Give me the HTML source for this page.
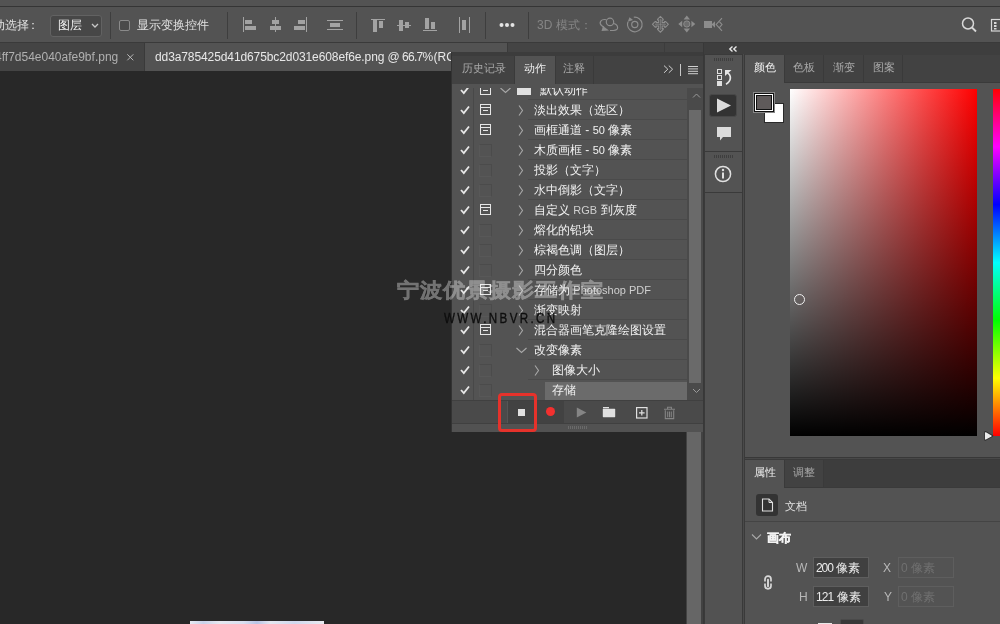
<!DOCTYPE html>
<html><head><meta charset="utf-8">
<style>
*{margin:0;padding:0;box-sizing:border-box}
html,body{width:1000px;height:624px;overflow:hidden;background:#282828;font-family:"Liberation Sans",sans-serif;}
.a{position:absolute}
.t{position:absolute;white-space:nowrap;font-size:12px;line-height:16px;color:#e0e0e0}
</style></head><body>
<!-- top strip -->
<div class="a" style="left:0;top:0;width:1000px;height:6px;background:#535353"></div>
<div class="a" style="left:0;top:6px;width:1000px;height:1px;background:#353535"></div>
<!-- options bar -->
<div class="a" style="left:0;top:7px;width:1000px;height:35px;background:#535353"></div>
<div class="a" style="left:0;top:42px;width:1000px;height:1px;background:#3a3a3a"></div>

<div class="t" style="left:-19px;top:17px">自动选择</div><div class="t" style="left:26.5px;top:17px">：</div>
<div class="a" style="left:50px;top:15px;width:52px;height:22px;background:#474747;border:1px solid #626262;border-radius:3px"></div>
<div class="t" style="left:58px;top:17px;color:#f0f0f0">图层</div>
<svg class="a" style="left:90px;top:22px" width="10" height="8"><path d="M2 2 L5 5 L8 2" stroke="#c8c8c8" stroke-width="1.3" fill="none"/></svg>
<div class="a" style="left:110px;top:12px;width:1px;height:27px;background:#3e3e3e"></div>
<div class="a" style="left:119px;top:20px;width:11px;height:11px;border:1px solid #8a8a8a;border-radius:2px;background:#4a4a4a"></div>
<div class="t" style="left:137px;top:17px">显示变换控件</div>
<div class="a" style="left:227px;top:12px;width:1px;height:27px;background:#3e3e3e"></div>

<!-- align icons -->
<svg class="a" style="left:0;top:0" width="1000" height="42">
<g fill="#a3a3a3">
<rect x="243" y="17" width="1" height="15"/><rect x="245" y="20" width="7" height="4"/><rect x="245" y="26" width="11" height="4"/>
<rect x="275" y="17" width="1" height="15"/><rect x="272" y="20" width="7" height="4"/><rect x="270" y="26" width="11" height="4"/>
<rect x="306" y="17" width="1" height="15"/><rect x="298" y="20" width="7" height="4"/><rect x="294" y="26" width="11" height="4"/>
<rect x="327" y="20" width="16" height="1"/><rect x="330" y="23" width="10" height="4"/><rect x="327" y="29" width="16" height="1"/>
<rect x="371" y="19" width="14" height="1"/><rect x="373" y="20" width="4" height="12"/><rect x="379" y="21" width="4" height="7"/>
<rect x="397" y="25" width="14" height="1"/><rect x="399" y="20" width="4" height="11"/><rect x="405" y="22" width="4" height="6"/>
<rect x="423" y="30" width="14" height="1"/><rect x="425" y="18" width="4" height="11"/><rect x="431" y="22" width="4" height="7"/>
<rect x="459" y="17" width="1" height="16"/><rect x="469" y="17" width="1" height="16"/><rect x="462" y="20" width="4" height="10"/>
</g>
<rect x="356" y="12" width="1" height="27" fill="#3e3e3e"/>
<rect x="485" y="12" width="1" height="27" fill="#3e3e3e"/>
<rect x="528" y="12" width="1" height="27" fill="#3e3e3e"/>
<g fill="#e4e4e4"><circle cx="501.5" cy="25" r="2"/><circle cx="507" cy="25" r="2"/><circle cx="512.5" cy="25" r="2"/></g>
<!-- search -->
<circle cx="968" cy="23.5" r="5.5" stroke="#d8d8d8" stroke-width="1.5" fill="none"/>
<path d="M972 27.5 L976 31.5" stroke="#d8d8d8" stroke-width="1.8"/>
<rect x="991.5" y="19.5" width="12" height="11.5" stroke="#d8d8d8" stroke-width="1.2" fill="none"/>
<rect x="994" y="22" width="2.5" height="2" fill="#d8d8d8"/><rect x="994" y="25" width="2.5" height="2" fill="#d8d8d8"/><rect x="994" y="28" width="2.5" height="1.5" fill="#d8d8d8"/>
</svg>
<div class="t" style="left:537px;top:17px;color:#858585">3D 模式：</div>

<!-- doc tab bar -->
<div class="a" style="left:0;top:43px;width:705px;height:28px;background:#444"></div><div class="a" style="left:507px;top:43px;width:1px;height:28px;background:#3a3a3a"></div><div class="a" style="left:664px;top:43px;width:1px;height:28px;background:#3c3c3c"></div>
<div class="a" style="left:145px;top:43px;width:362px;height:28px;background:#535353"></div>
<div class="a" style="left:144px;top:43px;width:1px;height:28px;background:#3a3a3a"></div>
<div class="t" style="left:-5px;top:49px;color:#b0b0b0">4ff7d54e040afe9bf.png</div>
<svg class="a" style="left:126px;top:53px" width="9" height="9"><path d="M1.3 1.3 L7.3 7.3 M7.3 1.3 L1.3 7.3" stroke="#b8b8b8" stroke-width="1"/></svg>
<div class="t" style="left:155px;top:49px;color:#e8e8e8;letter-spacing:-0.1px">dd3a785425d41d675bc2d031e608ef6e.png</div><div class="t" style="left:387.5px;top:49px;color:#e8e8e8">@</div><div class="t" style="left:402px;top:49px;color:#e8e8e8;letter-spacing:-0.7px">66.7%</div><div class="t" style="left:433.5px;top:49px;color:#e8e8e8">(RGB/8)</div>

<!-- canvas -->
<div class="a" style="left:0;top:71px;width:686px;height:553px;background:#282828"></div>
<div class="a" style="left:190px;top:621px;width:134px;height:3px;background:linear-gradient(to right,#e8eaf2 0%,#c9d2ea 10%,#e6e8f0 22%,#d9dff0 40%,#b8c4e6 50%,#e4e7f0 60%,#d0d8ee 78%,#e8eaf0 100%)"></div>
<!-- doc scrollbar -->
<div class="a" style="left:686px;top:71px;width:18px;height:553px;background:#424242"></div>
<div class="a" style="left:687px;top:71px;width:14px;height:553px;background:#666"></div>
<div class="a" style="left:703px;top:43px;width:2px;height:581px;background:#333"></div>
<!-- ACTIONS -->
<div class="a" style="left:452px;top:52px;width:252px;height:380px;background:#535353;overflow:hidden">
<div class="a" style="left:0;top:0;width:252px;height:4px;background:#3c3c3c"></div>
<div class="a" style="left:0;top:4px;width:252px;height:28px;background:#424242"></div>
<div class="a" style="left:63px;top:4px;width:40px;height:28px;background:#535353"></div>
<div class="a" style="left:62px;top:4px;width:1px;height:28px;background:#3a3a3a"></div>
<div class="a" style="left:103px;top:4px;width:1px;height:28px;background:#3a3a3a"></div>
<div class="a" style="left:141px;top:4px;width:1px;height:28px;background:#3a3a3a"></div>
<div class="t" style="left:10px;top:7.5px;font-size:11px;color:#a8a8a8">历史记录</div>
<div class="t" style="left:72px;top:7.5px;font-size:11px;font-weight:500;color:#f0f0f0">动作</div>
<div class="t" style="left:111px;top:7.5px;font-size:11px;color:#a8a8a8">注释</div>
<svg class="a" style="left:208px;top:11px" width="44" height="16"><path d="M4 2.6 L7.8 6.2 L4 9.8 M8.8 2.6 L12.6 6.2 L8.8 9.8" stroke="#d0d0d0" stroke-width="1" fill="none"/><rect x="20" y="1" width="1" height="12" fill="#c8c8c8"/><g fill="#d0d0d0"><rect x="28" y="3" width="10" height="1"/><rect x="28" y="5.4" width="10" height="1"/><rect x="28" y="7.8" width="10" height="1"/><rect x="28" y="10.2" width="10" height="1"/></g></svg>
<div class="a" style="left:0;top:36px;width:252px;height:312px;overflow:hidden;background:#535353">
<div class="a" style="left:21px;top:0;width:1px;height:312px;background:#484848"></div>
<div class="a" style="left:76px;top:11px;width:159px;height:1px;background:#4a4a4a"></div>
<svg class="a" style="left:8px;top:-3px" width="10" height="10"><path d="M1 5 L3.8 8 L9 1.5" stroke="#e8e8e8" stroke-width="1.8" fill="none"/></svg>
<svg class="a" style="left:28px;top:-4px" width="11" height="11" shape-rendering="crispEdges"><g fill="#e6e6e6"><rect x="0" y="0" width="11" height="1"/><rect x="0" y="10" width="11" height="1"/><rect x="0" y="0" width="1" height="11"/><rect x="10" y="0" width="1" height="11"/><rect x="0" y="3" width="11" height="1"/><rect x="3" y="6" width="5" height="1"/></g></svg>
<svg class="a" style="left:48px;top:-1px" width="11" height="7"><path d="M0.5 1 L5.5 5.5 L10.5 1" stroke="#a8a8a8" stroke-width="1.1" fill="none"/></svg>
<div class="a" style="left:65px;top:-4px;width:14px;height:11px;background:#e0e0e0"></div>
<div class="t" style="left:88px;top:-6px;font-size:12px;font-weight:500;color:#f2f2f2">默认动作</div>
<div class="a" style="left:76px;top:31px;width:159px;height:1px;background:#4a4a4a"></div>
<svg class="a" style="left:8px;top:17px" width="10" height="10"><path d="M1 5 L3.8 8 L9 1.5" stroke="#e8e8e8" stroke-width="1.8" fill="none"/></svg>
<svg class="a" style="left:28px;top:16px" width="11" height="11" shape-rendering="crispEdges"><g fill="#e6e6e6"><rect x="0" y="0" width="11" height="1"/><rect x="0" y="10" width="11" height="1"/><rect x="0" y="0" width="1" height="11"/><rect x="10" y="0" width="1" height="11"/><rect x="0" y="3" width="11" height="1"/><rect x="3" y="6" width="5" height="1"/></g></svg>
<svg class="a" style="left:66px;top:17px" width="6" height="11"><path d="M1 0.5 L4.5 5.5 L1 10.5" stroke="#a8a8a8" stroke-width="1.1" fill="none"/></svg>
<div class="t" style="left:82px;top:14px;font-size:12px;font-weight:500;color:#f2f2f2">淡出效果（选区）</div>
<div class="a" style="left:76px;top:51px;width:159px;height:1px;background:#4a4a4a"></div>
<svg class="a" style="left:8px;top:37px" width="10" height="10"><path d="M1 5 L3.8 8 L9 1.5" stroke="#e8e8e8" stroke-width="1.8" fill="none"/></svg>
<svg class="a" style="left:28px;top:36px" width="11" height="11" shape-rendering="crispEdges"><g fill="#e6e6e6"><rect x="0" y="0" width="11" height="1"/><rect x="0" y="10" width="11" height="1"/><rect x="0" y="0" width="1" height="11"/><rect x="10" y="0" width="1" height="11"/><rect x="0" y="3" width="11" height="1"/><rect x="3" y="6" width="5" height="1"/></g></svg>
<svg class="a" style="left:66px;top:37px" width="6" height="11"><path d="M1 0.5 L4.5 5.5 L1 10.5" stroke="#a8a8a8" stroke-width="1.1" fill="none"/></svg>
<div class="t" style="left:82px;top:34px;font-size:12px;font-weight:500;color:#f2f2f2">画框通道 - <span style="font-size:11px">50</span> 像素</div>
<div class="a" style="left:76px;top:71px;width:159px;height:1px;background:#4a4a4a"></div>
<svg class="a" style="left:8px;top:57px" width="10" height="10"><path d="M1 5 L3.8 8 L9 1.5" stroke="#e8e8e8" stroke-width="1.8" fill="none"/></svg>
<div class="a" style="left:27px;top:56px;width:13px;height:13px;border:1px solid #4b4b4b;border-left-color:#585858;border-bottom-color:#585858"></div>
<svg class="a" style="left:66px;top:57px" width="6" height="11"><path d="M1 0.5 L4.5 5.5 L1 10.5" stroke="#a8a8a8" stroke-width="1.1" fill="none"/></svg>
<div class="t" style="left:82px;top:54px;font-size:12px;font-weight:500;color:#f2f2f2">木质画框 - <span style="font-size:11px">50</span> 像素</div>
<div class="a" style="left:76px;top:91px;width:159px;height:1px;background:#4a4a4a"></div>
<svg class="a" style="left:8px;top:77px" width="10" height="10"><path d="M1 5 L3.8 8 L9 1.5" stroke="#e8e8e8" stroke-width="1.8" fill="none"/></svg>
<div class="a" style="left:27px;top:76px;width:13px;height:13px;border:1px solid #4b4b4b;border-left-color:#585858;border-bottom-color:#585858"></div>
<svg class="a" style="left:66px;top:77px" width="6" height="11"><path d="M1 0.5 L4.5 5.5 L1 10.5" stroke="#a8a8a8" stroke-width="1.1" fill="none"/></svg>
<div class="t" style="left:82px;top:74px;font-size:12px;font-weight:500;color:#f2f2f2">投影（文字）</div>
<div class="a" style="left:76px;top:111px;width:159px;height:1px;background:#4a4a4a"></div>
<svg class="a" style="left:8px;top:97px" width="10" height="10"><path d="M1 5 L3.8 8 L9 1.5" stroke="#e8e8e8" stroke-width="1.8" fill="none"/></svg>
<div class="a" style="left:27px;top:96px;width:13px;height:13px;border:1px solid #4b4b4b;border-left-color:#585858;border-bottom-color:#585858"></div>
<svg class="a" style="left:66px;top:97px" width="6" height="11"><path d="M1 0.5 L4.5 5.5 L1 10.5" stroke="#a8a8a8" stroke-width="1.1" fill="none"/></svg>
<div class="t" style="left:82px;top:94px;font-size:12px;font-weight:500;color:#f2f2f2">水中倒影（文字）</div>
<div class="a" style="left:76px;top:131px;width:159px;height:1px;background:#4a4a4a"></div>
<svg class="a" style="left:8px;top:117px" width="10" height="10"><path d="M1 5 L3.8 8 L9 1.5" stroke="#e8e8e8" stroke-width="1.8" fill="none"/></svg>
<svg class="a" style="left:28px;top:116px" width="11" height="11" shape-rendering="crispEdges"><g fill="#e6e6e6"><rect x="0" y="0" width="11" height="1"/><rect x="0" y="10" width="11" height="1"/><rect x="0" y="0" width="1" height="11"/><rect x="10" y="0" width="1" height="11"/><rect x="0" y="3" width="11" height="1"/><rect x="3" y="6" width="5" height="1"/></g></svg>
<svg class="a" style="left:66px;top:117px" width="6" height="11"><path d="M1 0.5 L4.5 5.5 L1 10.5" stroke="#a8a8a8" stroke-width="1.1" fill="none"/></svg>
<div class="t" style="left:82px;top:114px;font-size:12px;font-weight:500;color:#f2f2f2">自定义 <span style="font-size:11px;color:#d0d0d0">RGB</span> 到灰度</div>
<div class="a" style="left:76px;top:151px;width:159px;height:1px;background:#4a4a4a"></div>
<svg class="a" style="left:8px;top:137px" width="10" height="10"><path d="M1 5 L3.8 8 L9 1.5" stroke="#e8e8e8" stroke-width="1.8" fill="none"/></svg>
<div class="a" style="left:27px;top:136px;width:13px;height:13px;border:1px solid #4b4b4b;border-left-color:#585858;border-bottom-color:#585858"></div>
<svg class="a" style="left:66px;top:137px" width="6" height="11"><path d="M1 0.5 L4.5 5.5 L1 10.5" stroke="#a8a8a8" stroke-width="1.1" fill="none"/></svg>
<div class="t" style="left:82px;top:134px;font-size:12px;font-weight:500;color:#f2f2f2">熔化的铅块</div>
<div class="a" style="left:76px;top:171px;width:159px;height:1px;background:#4a4a4a"></div>
<svg class="a" style="left:8px;top:157px" width="10" height="10"><path d="M1 5 L3.8 8 L9 1.5" stroke="#e8e8e8" stroke-width="1.8" fill="none"/></svg>
<div class="a" style="left:27px;top:156px;width:13px;height:13px;border:1px solid #4b4b4b;border-left-color:#585858;border-bottom-color:#585858"></div>
<svg class="a" style="left:66px;top:157px" width="6" height="11"><path d="M1 0.5 L4.5 5.5 L1 10.5" stroke="#a8a8a8" stroke-width="1.1" fill="none"/></svg>
<div class="t" style="left:82px;top:154px;font-size:12px;font-weight:500;color:#f2f2f2">棕褐色调（图层）</div>
<div class="a" style="left:76px;top:191px;width:159px;height:1px;background:#4a4a4a"></div>
<svg class="a" style="left:8px;top:177px" width="10" height="10"><path d="M1 5 L3.8 8 L9 1.5" stroke="#e8e8e8" stroke-width="1.8" fill="none"/></svg>
<div class="a" style="left:27px;top:176px;width:13px;height:13px;border:1px solid #4b4b4b;border-left-color:#585858;border-bottom-color:#585858"></div>
<svg class="a" style="left:66px;top:177px" width="6" height="11"><path d="M1 0.5 L4.5 5.5 L1 10.5" stroke="#a8a8a8" stroke-width="1.1" fill="none"/></svg>
<div class="t" style="left:82px;top:174px;font-size:12px;font-weight:500;color:#f2f2f2">四分颜色</div>
<div class="a" style="left:76px;top:211px;width:159px;height:1px;background:#4a4a4a"></div>
<svg class="a" style="left:8px;top:197px" width="10" height="10"><path d="M1 5 L3.8 8 L9 1.5" stroke="#e8e8e8" stroke-width="1.8" fill="none"/></svg>
<svg class="a" style="left:28px;top:196px" width="11" height="11" shape-rendering="crispEdges"><g fill="#e6e6e6"><rect x="0" y="0" width="11" height="1"/><rect x="0" y="10" width="11" height="1"/><rect x="0" y="0" width="1" height="11"/><rect x="10" y="0" width="1" height="11"/><rect x="0" y="3" width="11" height="1"/><rect x="3" y="6" width="5" height="1"/></g></svg>
<svg class="a" style="left:66px;top:197px" width="6" height="11"><path d="M1 0.5 L4.5 5.5 L1 10.5" stroke="#a8a8a8" stroke-width="1.1" fill="none"/></svg>
<div class="t" style="left:82px;top:194px;font-size:12px;font-weight:500;color:#f2f2f2">存储为 <span style="font-size:11px;color:#d0d0d0">Photoshop PDF</span></div>
<div class="a" style="left:76px;top:231px;width:159px;height:1px;background:#4a4a4a"></div>
<svg class="a" style="left:8px;top:217px" width="10" height="10"><path d="M1 5 L3.8 8 L9 1.5" stroke="#e8e8e8" stroke-width="1.8" fill="none"/></svg>
<div class="a" style="left:27px;top:216px;width:13px;height:13px;border:1px solid #4b4b4b;border-left-color:#585858;border-bottom-color:#585858"></div>
<svg class="a" style="left:66px;top:217px" width="6" height="11"><path d="M1 0.5 L4.5 5.5 L1 10.5" stroke="#a8a8a8" stroke-width="1.1" fill="none"/></svg>
<div class="t" style="left:82px;top:214px;font-size:12px;font-weight:500;color:#f2f2f2">渐变映射</div>
<div class="a" style="left:76px;top:251px;width:159px;height:1px;background:#4a4a4a"></div>
<svg class="a" style="left:8px;top:237px" width="10" height="10"><path d="M1 5 L3.8 8 L9 1.5" stroke="#e8e8e8" stroke-width="1.8" fill="none"/></svg>
<svg class="a" style="left:28px;top:236px" width="11" height="11" shape-rendering="crispEdges"><g fill="#e6e6e6"><rect x="0" y="0" width="11" height="1"/><rect x="0" y="10" width="11" height="1"/><rect x="0" y="0" width="1" height="11"/><rect x="10" y="0" width="1" height="11"/><rect x="0" y="3" width="11" height="1"/><rect x="3" y="6" width="5" height="1"/></g></svg>
<svg class="a" style="left:66px;top:237px" width="6" height="11"><path d="M1 0.5 L4.5 5.5 L1 10.5" stroke="#a8a8a8" stroke-width="1.1" fill="none"/></svg>
<div class="t" style="left:82px;top:234px;font-size:12px;font-weight:500;color:#f2f2f2">混合器画笔克隆绘图设置</div>
<div class="a" style="left:76px;top:271px;width:159px;height:1px;background:#4a4a4a"></div>
<svg class="a" style="left:8px;top:257px" width="10" height="10"><path d="M1 5 L3.8 8 L9 1.5" stroke="#e8e8e8" stroke-width="1.8" fill="none"/></svg>
<div class="a" style="left:27px;top:256px;width:13px;height:13px;border:1px solid #4b4b4b;border-left-color:#585858;border-bottom-color:#585858"></div>
<svg class="a" style="left:64px;top:259px" width="11" height="7"><path d="M0.5 1 L5.5 5.5 L10.5 1" stroke="#a8a8a8" stroke-width="1.1" fill="none"/></svg>
<div class="t" style="left:82px;top:254px;font-size:12px;font-weight:500;color:#f2f2f2">改变像素</div>
<div class="a" style="left:76px;top:291px;width:159px;height:1px;background:#4a4a4a"></div>
<svg class="a" style="left:8px;top:277px" width="10" height="10"><path d="M1 5 L3.8 8 L9 1.5" stroke="#e8e8e8" stroke-width="1.8" fill="none"/></svg>
<div class="a" style="left:27px;top:276px;width:13px;height:13px;border:1px solid #4b4b4b;border-left-color:#585858;border-bottom-color:#585858"></div>
<svg class="a" style="left:82px;top:277px" width="6" height="11"><path d="M1 0.5 L4.5 5.5 L1 10.5" stroke="#a8a8a8" stroke-width="1.1" fill="none"/></svg>
<div class="t" style="left:100px;top:274px;font-size:12px;font-weight:500;color:#f2f2f2">图像大小</div>
<div class="a" style="left:93px;top:293.5px;width:142px;height:18px;background:#6b6b6b"></div>
<svg class="a" style="left:8px;top:297px" width="10" height="10"><path d="M1 5 L3.8 8 L9 1.5" stroke="#e8e8e8" stroke-width="1.8" fill="none"/></svg>
<div class="a" style="left:27px;top:296px;width:13px;height:13px;border:1px solid #4b4b4b;border-left-color:#585858;border-bottom-color:#585858"></div>
<div class="t" style="left:100px;top:294px;font-size:12px;font-weight:500;color:#f2f2f2">存储</div>
<div class="a" style="left:235px;top:0;width:16px;height:312px;background:#4a4a4a"></div>
<div class="a" style="left:237px;top:22px;width:12px;height:273px;background:#6a6a6a"></div>
<svg class="a" style="left:240px;top:5px" width="9" height="6"><path d="M1 4.5 L4.5 1 L8 4.5" stroke="#9a9a9a" stroke-width="1" fill="none"/></svg>
<svg class="a" style="left:240px;top:300px" width="9" height="6"><path d="M1 1 L4.5 4.5 L8 1" stroke="#9a9a9a" stroke-width="1" fill="none"/></svg>
</div>
<div class="a" style="left:0;top:348px;width:252px;height:23px;background:#4a4a4a"></div>
<div class="a" style="left:0;top:348px;width:252px;height:1px;background:#404040"></div>
<div class="a" style="left:55px;top:349px;width:57px;height:22px;background:#424242"></div>
<div class="a" style="left:55px;top:349px;width:1px;height:22px;background:#555"></div>
<div class="a" style="left:66px;top:357px;width:7px;height:7px;background:#e0e0e0"></div>
<div class="a" style="left:94.20000000000005px;top:355.2px;width:9.2px;height:9.2px;border-radius:50%;background:#f3302f"></div>
<svg class="a" style="left:124px;top:355px" width="11" height="11"><path d="M0.8 0.6 L10.4 5.6 L0.8 10.6Z" fill="#858585"/></svg>
<svg class="a" style="left:150px;top:354px" width="15" height="13"><rect x="1" y="1" width="6" height="1.3" fill="#e0e0e0"/><rect x="0.8" y="2.8" width="12.4" height="8.4" rx="0.6" fill="#e0e0e0"/></svg>
<svg class="a" style="left:184px;top:355px" width="12" height="12"><rect x="0.6" y="0.6" width="10.4" height="10.4" stroke="#e0e0e0" stroke-width="1.2" fill="none"/><path d="M5.8 3 V8.6 M3 5.8 H8.6" stroke="#e0e0e0" stroke-width="1.2"/></svg>
<svg class="a" style="left:211px;top:354px" width="13" height="14"><path d="M1 3.2 H12 M4.6 3.2 V1.2 H8.4 V3.2" stroke="#858585" stroke-width="1.1" fill="none"/><path d="M2.3 4.2 V12.6 H10.7 V4.2" stroke="#858585" stroke-width="1.1" fill="none"/><path d="M4.7 5.5 V11.3 M6.5 5.5 V11.3 M8.3 5.5 V11.3" stroke="#858585" stroke-width="1"/></svg>
<div class="a" style="left:0;top:371px;width:252px;height:9px;background:#525252"></div>
<div class="a" style="left:0;top:371px;width:252px;height:1px;background:#404040"></div>
<svg class="a" style="left:116px;top:374px" width="20" height="4"><g fill="#6a6a6a"><rect x="0" y="0" width="1" height="3"/><rect x="2" y="0" width="1" height="3"/><rect x="4" y="0" width="1" height="3"/><rect x="6" y="0" width="1" height="3"/><rect x="8" y="0" width="1" height="3"/><rect x="10" y="0" width="1" height="3"/><rect x="12" y="0" width="1" height="3"/><rect x="14" y="0" width="1" height="3"/><rect x="16" y="0" width="1" height="3"/><rect x="18" y="0" width="1" height="3"/></g></svg>
</div>
<div class="a" style="left:451px;top:52px;width:1px;height:380px;background:#333"></div>
<div class="a" style="left:498px;top:393px;width:38.5px;height:38.5px;border:3.5px solid #e6322b;border-radius:4px"></div>
<!-- /ACTIONS -->
<!-- RIGHT -->
<div class="a" style="left:704px;top:43px;width:296px;height:581px;background:#3e3e3e"></div>
<div class="a" style="left:703px;top:43px;width:1px;height:581px;background:#383838"></div>
<svg class="a" style="left:728px;top:45px" width="10" height="8"><path d="M4.5 1.5 L1.8 4 L4.5 6.5 M8.5 1.5 L5.8 4 L8.5 6.5" stroke="#e8e8e8" stroke-width="1.4" fill="none"/></svg>
<div class="a" style="left:704px;top:54px;width:1px;height:570px;background:#3a3a3a"></div>
<div class="a" style="left:704px;top:54px;width:40px;height:1px;background:#3a3a3a"></div>
<div class="a" style="left:705px;top:55px;width:37px;height:569px;background:#525252"></div>
<div class="a" style="left:742px;top:54px;width:1px;height:570px;background:#393939"></div>
<div class="a" style="left:743px;top:54px;width:1px;height:570px;background:#4a4a4a"></div>
<div class="a" style="left:705px;top:55px;width:37px;height:96px;background:#535353"></div>
<div class="a" style="left:705px;top:151px;width:37px;height:1px;background:#3a3a3a"></div>
<div class="a" style="left:705px;top:152px;width:37px;height:40px;background:#535353"></div>
<div class="a" style="left:705px;top:192px;width:37px;height:1px;background:#3a3a3a"></div>
<svg class="a" style="left:714px;top:58px" width="20" height="4"><g fill="#3e3e3e"><rect x="0" y="0" width="1" height="3"/><rect x="2" y="0" width="1" height="3"/><rect x="4" y="0" width="1" height="3"/><rect x="6" y="0" width="1" height="3"/><rect x="8" y="0" width="1" height="3"/><rect x="10" y="0" width="1" height="3"/><rect x="12" y="0" width="1" height="3"/><rect x="14" y="0" width="1" height="3"/><rect x="16" y="0" width="1" height="3"/><rect x="18" y="0" width="1" height="3"/></g></svg>
<svg class="a" style="left:714px;top:155px" width="20" height="4"><g fill="#3e3e3e"><rect x="0" y="0" width="1" height="3"/><rect x="2" y="0" width="1" height="3"/><rect x="4" y="0" width="1" height="3"/><rect x="6" y="0" width="1" height="3"/><rect x="8" y="0" width="1" height="3"/><rect x="10" y="0" width="1" height="3"/><rect x="12" y="0" width="1" height="3"/><rect x="14" y="0" width="1" height="3"/><rect x="16" y="0" width="1" height="3"/><rect x="18" y="0" width="1" height="3"/></g></svg>
<svg class="a" style="left:716px;top:68px" width="17" height="19"><g fill="none" stroke="#e0e0e0" stroke-width="1"><rect x="1.5" y="1.5" width="4" height="4"/><rect x="1.5" y="7.5" width="4" height="4"/></g><rect x="1" y="13" width="5" height="5" fill="#e0e0e0"/><path d="M9 2 H15.5 L9 8Z" fill="#e6e6e6"/><path d="M11 4.5 C15.5 7 15.8 13 10 16.2" stroke="#e6e6e6" stroke-width="1.7" fill="none"/></svg>
<div class="a" style="left:709px;top:94px;width:28px;height:23px;background:#333;border:1px solid #484848;border-radius:3px"></div>
<svg class="a" style="left:716px;top:98px" width="16" height="15"><path d="M1 0.5 L15 7.5 L1 14.5Z" fill="#dcdcdc"/></svg>
<svg class="a" style="left:716px;top:126px" width="16" height="16"><path d="M1 1 H15 V11 H7 L4 14.5 V11 H1Z" fill="#dcdcdc"/></svg>
<svg class="a" style="left:714px;top:165px" width="18" height="18"><circle cx="9" cy="9" r="7.6" stroke="#e0e0e0" stroke-width="1.5" fill="none"/><rect x="8" y="7.5" width="2" height="6" fill="#e0e0e0"/><circle cx="9" cy="5" r="1.2" fill="#e0e0e0"/></svg>
<div class="a" style="left:744px;top:54px;width:1px;height:570px;background:#3a3a3a"></div>
<div class="a" style="left:745px;top:55px;width:255px;height:402px;background:#535353"></div>
<div class="a" style="left:784px;top:55px;width:216px;height:27px;background:#424242"></div>
<div class="a" style="left:784px;top:82px;width:216px;height:1px;background:#3a3a3a"></div>
<div class="a" style="left:784px;top:55px;width:1px;height:27px;background:#3a3a3a"></div>
<div class="a" style="left:823px;top:55px;width:1px;height:27px;background:#3a3a3a"></div>
<div class="a" style="left:863px;top:55px;width:1px;height:27px;background:#3a3a3a"></div>
<div class="a" style="left:902px;top:55px;width:1px;height:27px;background:#3a3a3a"></div>
<div class="t" style="left:754px;top:59px;font-size:11px;font-weight:500;color:#f0f0f0">颜色</div>
<div class="t" style="left:793px;top:59px;font-size:11px;color:#a8a8a8">色板</div>
<div class="t" style="left:833px;top:59px;font-size:11px;color:#a8a8a8">渐变</div>
<div class="t" style="left:873px;top:59px;font-size:11px;color:#a8a8a8">图案</div>
<div class="a" style="left:764px;top:103px;width:20px;height:20px;background:#fff;border:1px solid #2a2a2a"></div>
<div class="a" style="left:753px;top:92px;width:22px;height:21px;background:#5f5a5a;border:1px solid #888;box-shadow:inset 0 0 0 1px #111, inset 0 0 0 2px #fff, inset 0 0 0 3px #111"></div>
<div class="a" style="left:790px;top:89px;width:187px;height:347px;background:linear-gradient(to bottom, rgba(0,0,0,0), #000), linear-gradient(to right, #fff, #f00)"></div>
<div class="a" style="left:794px;top:294px;width:11px;height:11px;border-radius:50%;border:1px solid #f0f0f0"></div>
<div class="a" style="left:993px;top:89px;width:7px;height:347px;background:linear-gradient(to bottom, #f00 0%, #f0f 16.67%, #00f 33.33%, #0ff 50%, #0f0 66.67%, #ff0 83.33%, #f00 100%)"></div>
<svg class="a" style="left:983px;top:430px" width="11" height="11"><path d="M2.2 1.8 L9.4 5.9 L2.2 10Z" fill="#333" stroke="#333" stroke-width="1.8" stroke-linejoin="round"/><path d="M2.6 2.8 L8.1 5.9 L2.6 9Z" fill="#ececec" stroke="#ececec" stroke-width="1.2" stroke-linejoin="round"/></svg>
<div class="a" style="left:745px;top:457px;width:255px;height:1px;background:#383838"></div><div class="a" style="left:745px;top:458px;width:255px;height:1px;background:#484848"></div><div class="a" style="left:745px;top:459px;width:255px;height:1px;background:#3a3a3a"></div>
<div class="a" style="left:745px;top:460px;width:255px;height:164px;background:#535353"></div>
<div class="a" style="left:784px;top:460px;width:216px;height:27px;background:#424242"></div>
<div class="a" style="left:823px;top:460px;width:177px;height:27px;background:#3d3d3d"></div>
<div class="a" style="left:784px;top:460px;width:1px;height:27px;background:#3a3a3a"></div>
<div class="a" style="left:823px;top:460px;width:1px;height:27px;background:#3a3a3a"></div>
<div class="a" style="left:784px;top:487px;width:216px;height:1px;background:#3a3a3a"></div>
<div class="t" style="left:754px;top:464px;font-size:11px;font-weight:500;color:#f0f0f0">属性</div>
<div class="t" style="left:793px;top:464px;font-size:11px;color:#a8a8a8">调整</div>
<div class="a" style="left:756px;top:494px;width:22px;height:22px;background:#333;border-radius:3px"></div>
<svg class="a" style="left:761px;top:498px" width="13" height="14"><path d="M1.5 1 H8 L11.5 4.5 V13 H1.5Z" stroke="#e0e0e0" stroke-width="1.1" fill="none"/><path d="M8 1 V4.5 H11.5" stroke="#e0e0e0" stroke-width="1" fill="none"/></svg>
<div class="t" style="left:785px;top:498px;font-size:11px;color:#e0e0e0">文档</div>
<div class="a" style="left:745px;top:521px;width:255px;height:1px;background:#444"></div>
<svg class="a" style="left:751px;top:533px" width="11" height="8"><path d="M1 1.5 L5.5 6 L10 1.5" stroke="#a8a8a8" stroke-width="1.1" fill="none"/></svg>
<div class="t" style="left:767px;top:530px;font-size:12px;font-weight:900;color:#f4f4f4;-webkit-text-stroke:0.4px #f4f4f4">画布</div>
<div class="t" style="left:796px;top:560px;font-size:12px;color:#b8b8b8">W</div>
<div class="t" style="left:799px;top:589px;font-size:12px;color:#b8b8b8">H</div>
<div class="t" style="left:883px;top:560px;font-size:12px;color:#b8b8b8">X</div>
<div class="t" style="left:884px;top:589px;font-size:12px;color:#b8b8b8">Y</div>
<div class="a" style="left:813px;top:557px;width:56px;height:21px;background:#404040;border:1px solid #5e5e5e"></div>
<div class="a" style="left:813px;top:586px;width:56px;height:21px;background:#404040;border:1px solid #5e5e5e"></div>
<div class="a" style="left:898px;top:557px;width:56px;height:21px;border:1px solid #5e5e5e"></div>
<div class="a" style="left:898px;top:586px;width:56px;height:21px;border:1px solid #5e5e5e"></div>
<div class="t" style="left:816px;top:560px;font-size:12px;color:#ececec"><span style="letter-spacing:-1.1px">200</span> <span style="font-size:11.5px">像素</span></div>
<div class="t" style="left:816px;top:589px;font-size:12px;color:#ececec"><span style="letter-spacing:-0.9px">121</span> <span style="font-size:11.5px">像素</span></div>
<div class="t" style="left:901px;top:560px;font-size:12px;color:#707070">0 像素</div>
<div class="t" style="left:901px;top:589px;font-size:12px;color:#707070">0 像素</div>
<svg class="a" style="left:762px;top:574px" width="12" height="18"><path d="M3 7.6 V5.2 A3 3 0 0 1 9 5.2 V7.6 M3 9.4 V11.8 A3 3 0 0 0 9 11.8 V9.4" stroke="#d8d8d8" stroke-width="1.7" fill="none"/><rect x="5.1" y="4.8" width="1.8" height="8.4" rx="0.9" fill="#e0e0e0"/></svg>
<div class="a" style="left:818px;top:623px;width:14px;height:1px;background:#e8e8e8"></div>
<div class="a" style="left:839.5px;top:619px;width:24px;height:5px;background:#383838;border:1px solid #4a4a4a;border-bottom:0;border-radius:2px 2px 0 0"></div>
<svg class="a" style="left:0;top:0" width="1000" height="42"><g stroke="#8e8e8e" fill="none" stroke-width="1.15">
<circle cx="610" cy="21.9" r="3.7"/>
<path d="M606.5 19.8 C601 18.5 598.5 22.5 601.5 25.5 L604 27.3"/>
<path d="M613.5 23.5 C618.5 24.5 619.5 30.5 613.5 30.5 L610 30.5"/>
<circle cx="634.8" cy="24.5" r="7.3" stroke-dasharray="38 8" transform="rotate(262 634.8 24.5)"/>
<circle cx="634.8" cy="24.5" r="3.1"/>
<path d="M658.70 22.60 L658.70 20.00 L657.60 20.00 L657.60 19.10 L660.40 16.40 L663.20 19.10 L663.20 20.00 L662.10 20.00 L662.10 22.60 L664.70 22.60 L664.70 21.50 L665.60 21.50 L668.30 24.30 L665.60 27.10 L664.70 27.10 L664.70 26.00 L662.10 26.00 L662.10 28.60 L663.20 28.60 L663.20 29.50 L660.40 32.20 L657.60 29.50 L657.60 28.60 L658.70 28.60 L658.70 26.00 L656.10 26.00 L656.10 27.10 L655.20 27.10 L652.50 24.30 L655.20 21.50 L656.10 21.50 L656.10 22.60Z" stroke-width="1.05" stroke-linejoin="miter"/><path d="M660.4 18.8 V29.8 M654.9 24.3 H665.9" stroke-width="0.7"/>
<path d="M722 18.2 L716.2 24.5 L722 30.8 M719.6 21.8 L722 24.5 L719.6 27.3" stroke-width="1.1"/>
</g>
<g fill="#8c8c8c">
<path d="M601.5 31 L603 26 L609 30.5 Z"/>
<path d="M627.8 21.8 L629.5 17.3 L633 20 Z"/>
<circle cx="686.8" cy="24.0" r="3.1" fill="#6e6e6e" stroke="#8c8c8c" stroke-width="1"/>
<path d="M686.80 15.50 L690.00 19.40 L683.60 19.40Z M686.80 32.50 L683.60 28.60 L690.00 28.60Z M678.30 24.00 L682.20 20.80 L682.20 27.20Z M695.30 24.00 L691.40 27.20 L691.40 20.80Z"/>
<rect x="704" y="21" width="8" height="7"/>
<path d="M711.5 24.5 L715 21.2 L715 27.8Z"/>
</g></svg>
<div class="t" style="left:396.5px;top:277px;font-size:22.5px;line-height:30px;font-weight:900;color:#595959;-webkit-text-stroke:0.45px #595959;mix-blend-mode:screen;letter-spacing:0px;transform:scaleY(0.9);transform-origin:0 0">宁波优景摄影工作室</div>
<div class="t" style="left:444px;top:309px;font-size:14.5px;line-height:18px;letter-spacing:2.95px;color:#0e0e0e;-webkit-text-stroke:0.35px #0e0e0e;transform:scaleX(0.8);transform-origin:0 0">WWW.NBVR.CN</div>
<!-- /RIGHT -->
</body></html>
